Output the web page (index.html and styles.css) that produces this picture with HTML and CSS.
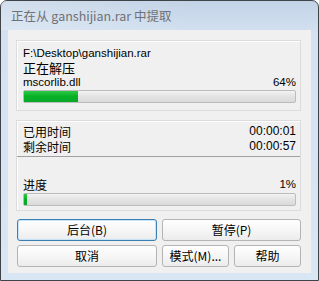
FILE: index.html
```html
<html>
  <head>
    <title>正在从 ganshijian.rar 中提取</title>
    <link rel="stylesheet" href="styles.css">
  </head>
  <body>
    <div class="window">
      <div class="titlebar">正在从 ganshijian.rar 中提取</div>

      <div class="client">
        <!-- current file -->
        <div class="group file-group">
          <div class="row latin">F:\Desktop\ganshijian.rar</div>
          <div class="row status">正在解压</div>
          <div class="row split latin">
            <span>mscorlib.dll</span>
            <span>64%</span>
          </div>
          <div class="bar"><div class="fill" style="width: 20%"></div></div>
        </div>

        <!-- time and total progress -->
        <div class="group time-group">
          <div class="row split">
            <span>已用时间</span>
            <span class="latin time">00:00:01</span>
          </div>
          <div class="row split">
            <span>剩余时间</span>
            <span class="latin time">00:00:57</span>
          </div>
          <div class="sep"></div>
          <div class="row split progress-label">
            <span>进度</span>
            <span class="latin">1%</span>
          </div>
          <div class="bar"><div class="fill" style="width: 1%"></div></div>
        </div>

        <div class="buttons">
          <button class="btn wide focused">后台(B)</button>
          <button class="btn span2">暂停(P)</button>
          <button class="btn wide">取消</button>
          <button class="btn">模式(M)...</button>
          <button class="btn">帮助</button>
        </div>
      </div>
    </div>
  </body>
</html>
```

FILE: styles.css
```css
body {
  margin: 0;
  background: #ffffff;
  font-family: "Noto Sans CJK SC", "Liberation Sans", sans-serif;
  font-size: 12px;
  color: #000000;
}

.window {
  width: 317px;
  height: 279px;
  border: 1px solid #3f4347;
  border-radius: 7px 7px 0 0;
  background: linear-gradient(180deg, #c3d3e6 0%, #d3e1f1 12%, #d9e6f4 100%);
}

.titlebar {
  height: 29px;
  line-height: 30px;
  padding-left: 10px;
  color: #6e7276;
  font-size: 12.5px;
  background: linear-gradient(90deg, rgba(255, 255, 255, 0.25), rgba(255, 255, 255, 0) 60%);
}

.client {
  margin: 0 7px;
  width: 303px;
  height: 243px;
  box-sizing: border-box;
  background: #f0f0f0;
  padding: 10px 10px 0 8px;
}

.group {
  border: 1px solid #dcdcdc;
  box-shadow: inset 1px 1px 0 #ffffff;
  padding: 0 4px 0 6px;
}

.file-group {
  height: 71px;
  box-sizing: border-box;
  padding-top: 5px;
}

.time-group {
  margin-top: 9px;
  height: 91px;
  box-sizing: border-box;
  padding-top: 3px;
}

.row {
  line-height: 15px;
  height: 15px;
  white-space: nowrap;
}

.latin {
  font-family: "Liberation Sans", sans-serif;
  font-size: 11.5px;
}

.time {
  font-size: 12px;
}

.file-group .latin {
  line-height: 14px;
  height: 14px;
}

.status {
  font-size: 13px;
}

.split {
  display: flex;
  justify-content: space-between;
}

.sep {
  height: 1px;
  background: #a0a0a0;
  margin: 2px -4px 20px -6px;
}

.bar {
  height: 11px;
  margin-top: 1px;
  border: 1px solid #bcbcbc;
  border-radius: 2px;
  background: linear-gradient(180deg, #f3f3f3, #e3e3e3 50%, #dadada);
}

.fill {
  height: 100%;
  min-width: 3px;
  background: linear-gradient(180deg, #2ec847, #06b025 50%, #0aa82a);
}

.buttons {
  display: grid;
  grid-template-columns: 140px 67px 67px;
  grid-auto-rows: 22px;
  column-gap: 5px;
  row-gap: 4px;
  margin-top: 8px;
  margin-left: 1px;
}

.btn {
  font-family: "Noto Sans CJK SC", "Liberation Sans", sans-serif;
  font-size: 12px;
  color: #000000;
  border: 1px solid #b4b4b4;
  border-radius: 3px;
  background: linear-gradient(180deg, #ffffff, #f6f6f6 50%, #ececec);
  padding: 0;
  line-height: 18px;
}

.span2 {
  grid-column: span 2;
}

.focused {
  border-color: #3c7fb1;
  box-shadow: inset 0 0 0 1px #c6e4f7;
}
```
